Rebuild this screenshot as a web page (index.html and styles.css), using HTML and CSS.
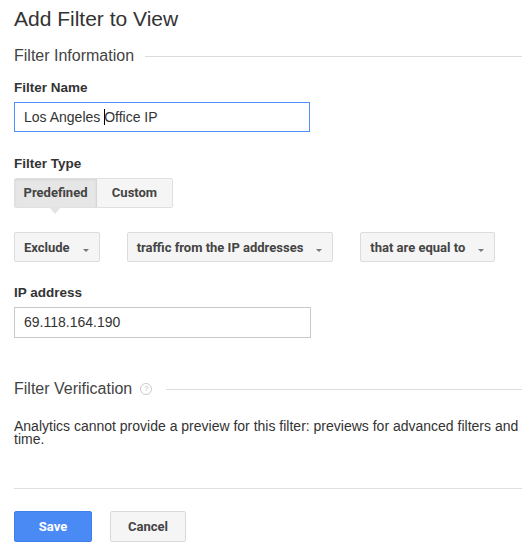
FILE: index.html
```html
<!DOCTYPE html>
<html lang="en">
<head>
  <meta charset="UTF-8" />
  <title>Add Filter to View</title>
  <link rel="stylesheet" href="styles.css">
</head>
<body>

  <h1 class="titulo">Add Filter to View</h1>

  <div class="secao">
    <span>Filter Information</span>
  </div>

  <div class="campo">
    <label class="rotulo">Filter Name</label>
    <div class="caixa caixa-foco">Los Angeles <span class="cursor"></span>Office IP</div>
  </div>

  <div class="campo">
    <label class="rotulo">Filter Type</label>
    <div class="abas">
      <div class="aba aba-ativa">Predefined</div>
      <div class="aba aba-custom">Custom</div>
    </div>
  </div>

  <div class="selecoes">
    <div class="selecao">Exclude <span class="seta"></span></div>
    <div class="selecao">traffic from the IP addresses <span class="seta"></span></div>
    <div class="selecao">that are equal to <span class="seta"></span></div>
  </div>

  <div class="campo campo-ip">
    <label class="rotulo">IP address</label>
    <div class="caixa">69.118.164.190</div>
  </div>

  <div class="secao secao-verif">
    <span>Filter Verification</span>
    <span class="ajuda">?</span>
  </div>

  <p class="aviso">Analytics cannot provide a preview for this filter: previews for advanced filters and time.</p>

  <div class="acoes">
    <button class="botao botao-salvar">Save</button>
    <button class="botao botao-cancelar">Cancel</button>
  </div>

</body>
</html>
```

FILE: styles.css
```css
body {
  margin: 0;
  padding: 0 0 0 14px;
  background: #fff;
  font-family: "Liberation Sans", Arial, sans-serif;
  color: #333;
}

.titulo {
  font-size: 21px;
  font-weight: normal;
  color: #333;
  margin: 6px 0 0;
  line-height: 26px;
}

/* Titulo de secao com linha */
.secao {
  display: flex;
  align-items: center;
  gap: 11px;
  margin-top: 15px;
  font-size: 16px;
  color: #444;
  line-height: 18px;
}

.secao::after {
  content: "";
  flex: 1;
  border-top: 1px solid #dcdcdc;
}

.campo {
  margin-top: 15px;
}

.campo + .campo {
  margin-top: 24px;
}

.rotulo {
  display: block;
  font-size: 13.5px;
  font-weight: bold;
  color: #333;
  line-height: 15px;
}

.caixa {
  box-sizing: border-box;
  width: 297px;
  height: 31px;
  margin-top: 7px;
  padding: 0 9px;
  border: 1px solid #c9c9c9;
  font-size: 14px;
  line-height: 29px;
  color: #333;
}

.caixa-foco {
  border-color: #4d90fe;
  width: 296px;
  height: 30px;
  line-height: 28px;
}

.cursor {
  display: inline-block;
  width: 1px;
  height: 16px;
  background: #000;
  vertical-align: -3px;
  margin-right: -1px;
}

/* Predefined / Custom */
.abas {
  display: flex;
  width: max-content;
  margin-top: 7px;
  border: 1px solid #e0e0e0;
  border-radius: 2px;
  position: relative;
}

.aba {
  height: 28px;
  line-height: 28px;
  text-align: center;
  font-family: Roboto, sans-serif;
  font-size: 13px;
  font-weight: bold;
  color: #444;
  background: #f5f5f5;
}

.aba-ativa {
  width: 81px;
  background: #e6e6e6;
  border-right: 1px solid #d6d6d6;
  box-shadow: inset 0 1px 2px rgba(0, 0, 0, 0.08);
  position: relative;
}

.aba-custom {
  width: 75px;
}

.aba-ativa::after {
  content: "";
  position: absolute;
  left: 34px;
  bottom: -7px;
  border-left: 6px solid transparent;
  border-right: 6px solid transparent;
  border-top: 7px solid #e3e3e3;
}

.selecoes {
  display: flex;
  gap: 27px;
  margin-top: 24px;
}

.selecao {
  box-sizing: border-box;
  height: 30px;
  padding: 0 10px 0 9px;
  border: 1px solid #dcdcdc;
  border-radius: 2px;
  background: #f5f5f5;
  font-family: Roboto, sans-serif;
  font-size: 13px;
  font-weight: bold;
  color: #444;
  display: flex;
  align-items: center;
}

.seta {
  display: inline-block;
  margin-left: 13px;
  margin-top: 6px;
  border-left: 3.5px solid transparent;
  border-right: 3.5px solid transparent;
  border-top: 3px solid #777;
}

.campo-ip {
  margin-top: 23px;
}

.secao-verif {
  margin-top: 42px;
}

.ajuda {
  display: inline-flex;
  align-items: center;
  justify-content: center;
  box-sizing: border-box;
  width: 12px;
  height: 12px;
  border: 1px solid #ccc;
  border-radius: 50%;
  font-size: 8px;
  color: #bbb;
  margin-left: -3px;
  margin-right: 3px;
}

.aviso {
  margin: 22px 0 0;
  font-size: 14px;
  line-height: 13px;
  color: #333;
}

.acoes {
  margin-top: 42px;
  padding-top: 22px;
  border-top: 1px solid #e0e0e0;
  display: flex;
  gap: 18px;
}

.botao {
  box-sizing: border-box;
  height: 31px;
  border: 1px solid #d9d9d9;
  border-radius: 2px;
  background: #f5f5f5;
  font-family: Roboto, sans-serif;
  font-size: 13px;
  font-weight: bold;
  color: #444;
  cursor: pointer;
}

.botao-salvar {
  width: 78px;
  background: #4a8af4;
  border-color: #3f7fe8;
  color: #fff;
}

.botao-cancelar {
  width: 76px;
}
```
